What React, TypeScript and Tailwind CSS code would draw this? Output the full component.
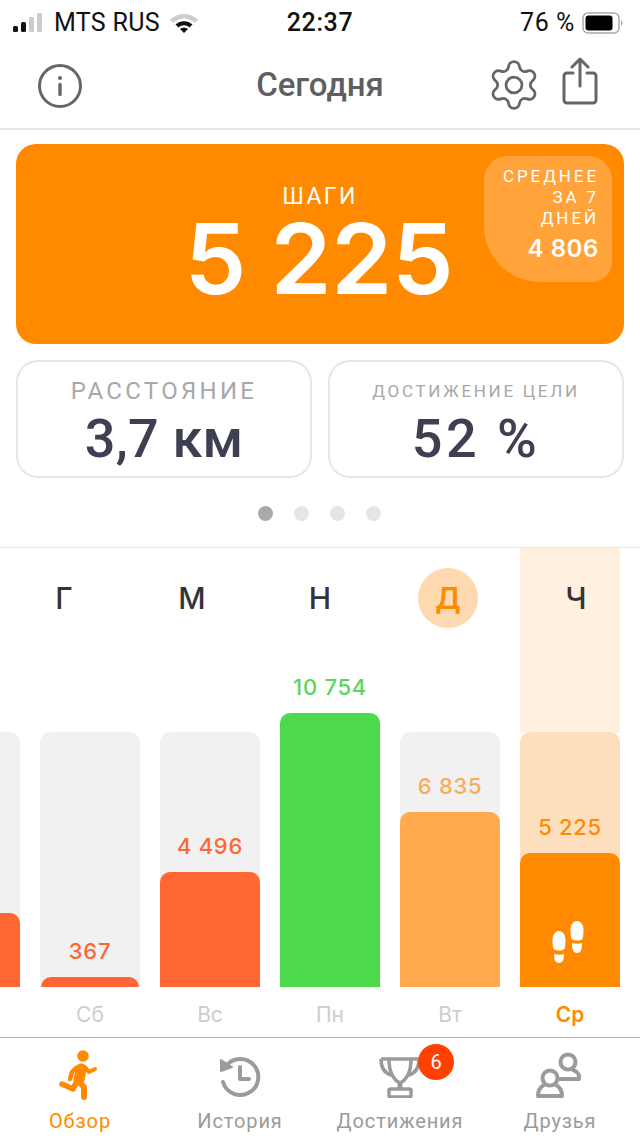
import React from "react";

const sans = "font-['Inter','Liberation_Sans',sans-serif]";
const rob = "font-['Roboto','Liberation_Sans',sans-serif]";

function Signal() {
  return (
    <svg width="32" height="20" viewBox="0 0 32 20" className="mr-[10px]">
      <rect x="1" y="13" width="5" height="6" rx="1.5" fill="#111" />
      <rect x="9" y="9" width="5" height="10" rx="1.5" fill="#111" />
      <rect x="17" y="4" width="5" height="15" rx="1" fill="#ccc" />
      <rect x="25" y="0" width="5" height="19" rx="1" fill="#ccc" />
    </svg>
  );
}

function Wifi() {
  return (
    <svg width="30" height="22" viewBox="0 0 30 22">
      <path d="M1 7.5 C9 0 21 0 29 7.5 L26 11 C19 5 11 5 4 11 Z" fill="#ccc" />
      <path d="M6.5 12.5 C11.5 8 18.5 8 23.5 12.5 L20.5 15.5 C17 12.5 13 12.5 9.5 15.5 Z" fill="#111" />
      <path d="M11 17 C13.5 15 16.5 15 19 17 L15 21 Z" fill="#111" />
    </svg>
  );
}

function Battery() {
  return (
    <svg width="42" height="22" viewBox="0 0 42 22">
      <rect x="1" y="1" width="36" height="20" rx="5" fill="none" stroke="#aaa" strokeWidth="1.5" />
      <rect x="3.5" y="3.5" width="27" height="15" rx="3" fill="#000" />
      <path d="M39 8 C41 9 41 13 39 14 Z" fill="#aaa" />
    </svg>
  );
}

function Info() {
  return (
    <svg width="46" height="46" viewBox="0 0 46 46" fill="none" stroke="#666" strokeWidth="3">
      <circle cx="23" cy="23" r="20.5" />
      <circle cx="23" cy="15" r="2" fill="#666" stroke="none" />
      <path d="M23 21.5 V31.5" strokeLinecap="round" strokeWidth="3.4" />
    </svg>
  );
}

function Gear() {
  return (
    <svg width="56" height="56" viewBox="0 0 24 24" fill="none" stroke="#666" strokeWidth="1.2" strokeLinecap="round" strokeLinejoin="round">
      <path d="M9.671 4.136a2.34 2.34 0 0 1 4.659 0 2.34 2.34 0 0 0 3.319 1.915 2.34 2.34 0 0 1 2.33 4.033 2.34 2.34 0 0 0 0 3.831 2.34 2.34 0 0 1-2.33 4.033 2.34 2.34 0 0 0-3.319 1.915 2.34 2.34 0 0 1-4.659 0 2.34 2.34 0 0 0-3.32-1.915 2.34 2.34 0 0 1-2.33-4.033 2.34 2.34 0 0 0 0-3.831A2.34 2.34 0 0 1 6.35 6.051a2.34 2.34 0 0 0 3.319-1.915" />
      <circle cx="12" cy="12" r="3.4" />
    </svg>
  );
}

function Share() {
  return (
    <svg width="36" height="48" viewBox="0 0 36 48" fill="none" stroke="#666" strokeWidth="3" strokeLinecap="round" strokeLinejoin="round">
      <path d="M11 16 H5 a3 3 0 0 0 -3 3 V43 a3 3 0 0 0 3 3 H31 a3 3 0 0 0 3 -3 V19 a3 3 0 0 0 -3 -3 H25" />
      <path d="M18 29 V3 M10 10 L18 2 L26 10" />
    </svg>
  );
}

function Runner() {
  return (
    <svg width="40" height="52" viewBox="0 0 40 52" fill="none" stroke="#ff8a00" strokeLinecap="round" strokeLinejoin="round">
      <circle cx="25" cy="7" r="5.8" fill="#ff8a00" stroke="none" />
      <path d="M23 20 L21 31" strokeWidth="11" />
      <path d="M20 32 L26 38 L26 48" strokeWidth="6" />
      <path d="M19 32 L15 40 L4 35" strokeWidth="5.5" />
      <path d="M18 19 L14 23 L12 30" strokeWidth="4.5" />
      <path d="M27 18 L31 23 L37 20" strokeWidth="4" />
    </svg>
  );
}

function HistoryIcon() {
  return (
    <svg width="44" height="44" viewBox="0 0 44 44" fill="none" stroke="#9b9b9b" strokeWidth="4" strokeLinecap="round" strokeLinejoin="round">
      <path d="M8 12 A18 18 0 1 1 5 28" />
      <path d="M3 6 L14 13 L3 17 Z" fill="#9b9b9b" strokeWidth="2" />
      <path d="M22 13 V25 H31" />
    </svg>
  );
}

function TrophyIcon() {
  return (
    <svg width="44" height="44" viewBox="0 0 44 44" fill="none" stroke="#9b9b9b" strokeWidth="3.5" strokeLinejoin="round">
      <path d="M3 5 H41" />
      <path d="M3 5 C3 13 6 19 13 21 M41 5 C41 13 38 19 31 21" />
      <path d="M11 5 C11 16 14 25 22 29 C30 25 33 16 33 5" />
      <path d="M22 29 V35" strokeWidth="5" />
      <rect x="11" y="35" width="22" height="8" rx="1.5" />
    </svg>
  );
}

function FriendsIcon() {
  return (
    <svg width="48" height="46" viewBox="0 0 48 46" fill="none" stroke="#9b9b9b" strokeWidth="4" strokeLinecap="round" strokeLinejoin="round">
      <circle cx="33" cy="10" r="7.5" />
      <path d="M25 27 H44 C45 22 41 19 38 18" />
      <circle cx="15" cy="26" r="7.5" />
      <path d="M3 44 H27 C27 39 25 35 21 33 M9 33 C5 35 3 39 3 44" />
    </svg>
  );
}

function Steps() {
  return (
    <svg width="34" height="44" viewBox="0 0 34 44" fill="#fff">
      <path d="M8 11 C12 11 14.5 15 14.5 20 C14.5 24 14 27 13.5 29 C10 31 6 31 2.5 29 C2 27 1.5 24 1.5 20 C1.5 15 4 11 8 11 Z" />
      <path d="M3 34 C7 35 10 35 13 34 C13 39 12 43 8 43 C4 43 3 39 3 34 Z" />
      <path d="M26 1 C30 1 32.5 5 32.5 10 C32.5 14 32 17 31.5 19 C28 21 24 21 20.5 19 C20 17 19.5 14 19.5 10 C19.5 5 22 1 26 1 Z" />
      <path d="M21 23 C25 24 28 24 31 23 C31 29 30 33 26 33 C22 33 21 29 21 23 Z" />
    </svg>
  );
}

function StatCard({ title, value, small }: { title: string; value: string; small?: boolean }) {
  return (
    <div className="flex h-[118px] flex-1 flex-col items-center rounded-[22px] border-2 border-[#e6e6e6] bg-white">
      <div
        className={`${rob} ${
          small ? "mt-[14px] h-[32px] text-[17px] tracking-[2.7px]" : "mt-[14px] h-[32px] text-[24px] tracking-[3.3px]"
        } leading-[30px] text-[#a8a8a8]`}
      >
        {title}
      </div>
      <div
        className={`${rob} mt-[3px] text-[54px] leading-[56px] font-medium ${
          small ? "tracking-[3.5px]" : "tracking-[0.2px]"
        } text-[#3f3f52]`}
      >
        {value}
      </div>
    </div>
  );
}

const bars = [
  { v: "", h: 74, c: "bg-[#ff6633]", t: "text-[#ff6633]", day: "" },
  { v: "367", h: 10, c: "bg-[#ff6633]", t: "text-[#ff6633]", day: "Сб", inset: true },
  { v: "4 496", h: 115, c: "bg-[#ff6633]", t: "text-[#ff6633]", day: "Вс" },
  { v: "10 754", h: 274, c: "bg-[#4cd94c]", t: "text-[#5ad65a]", day: "Пн" },
  { v: "6 835", h: 175, c: "bg-[#ffaa4d]", t: "text-[#f9ac55]", day: "Вт" },
  { v: "5 225", h: 134, c: "bg-[#ff8a00]", t: "text-[#ff8a00]", day: "Ср", today: true },
];

function Tab({ icon, label, active, badge }: { icon: React.ReactNode; label: string; active?: boolean; badge?: string }) {
  return (
    <div className="relative flex flex-col items-center">
      <div className="flex h-[71px] items-end pb-[11px]">{icon}</div>
      {badge && (
        <div
          className={`${rob} absolute top-[6px] left-[98px] flex h-[36px] w-[36px] items-center justify-center rounded-full bg-[#ff4000] text-[20px] text-white`}
        >
          {badge}
        </div>
      )}
      <div className={`${rob} -mt-[1px] text-[20px] leading-[26px] tracking-[0.9px] ${active ? "text-[#ff8a00]" : "text-[#9b9b9b]"}`}>
        {label}
      </div>
    </div>
  );
}

export default function App() {
  return (
    <div className={`${sans} flex h-[1136px] w-[640px] flex-col overflow-hidden bg-white`}>
      {/* status bar */}
      <div className="relative flex h-[44px] shrink-0 items-center pt-[1px] pr-[16px] pl-[12px] text-[#111]">
        <Signal />
        <span className={`${rob} text-[25px] tracking-[0.3px]`}>MTS RUS</span>
        <span className="ml-[9px]">
          <Wifi />
        </span>
        <span className={`${rob} absolute left-0 w-full text-center text-[25px] font-medium tracking-[0.6px]`}>22:37</span>
        <span className={`${rob} mr-[7px] ml-auto text-[25px] tracking-[0.6px]`}>76 %</span>
        <Battery />
      </div>

      {/* header */}
      <div className="relative flex h-[86px] shrink-0 items-center border-b-2 border-[#e5e5e5] pr-[40px] pl-[37px]">
        <Info />
        <div className={`${rob} absolute left-0 -mt-[3px] w-full text-center text-[33px] font-medium text-[#5f5f63]`}>Сегодня</div>
        <div className="ml-auto flex items-center gap-[12px]">
          <span className="-mx-[6px] -mt-[2px]">
            <Gear />
          </span>
          <span className="-mt-[10px] mr-[2px] ml-[14px]">
            <Share />
          </span>
        </div>
      </div>

      {/* steps */}
      <div className="relative mx-[16px] mt-[14px] flex h-[200px] shrink-0 flex-col items-center rounded-[20px] bg-[#ff8a00] text-white">
        <div className={`${rob} mt-[39px] text-[23px] leading-[28px] tracking-[2.4px]`}>ШАГИ</div>
        <div className={`${sans} mt-[10px] mr-[2px] text-[98px] leading-[76px] font-semibold tracking-[-0.3px]`}>5 225</div>
        <div className="absolute top-[12px] right-[12px] h-[126px] w-[128px] rounded-tl-[24px] rounded-tr-[24px] rounded-br-[20px] rounded-bl-[56px] bg-[#ffa33a] pt-[10px] pr-[13px] text-right">
          <div className={`${rob} text-[17px] leading-[21px] tracking-[2.9px]`}>СРЕДНЕЕ<br />ЗА 7<br />ДНЕЙ</div>
          <div className={`${sans} mt-[5px] text-[24px] leading-[30px] font-semibold tracking-[0.6px]`}>4 806</div>
        </div>
      </div>

      {/* stat cards */}
      <div className="mx-[16px] mt-[16px] flex shrink-0 gap-[16px]">
        <StatCard title="РАССТОЯНИЕ" value="3,7 км" />
        <StatCard title="ДОСТИЖЕНИЕ ЦЕЛИ" value="52 %" small />
      </div>

      {/* dots */}
      <div className="mt-[28px] flex shrink-0 justify-center gap-[21px] pr-[1px]">
        <div className="h-[15px] w-[15px] rounded-full bg-[#a9a9a9]" />
        <div className="h-[15px] w-[15px] rounded-full bg-[#e5e5e5]" />
        <div className="h-[15px] w-[15px] rounded-full bg-[#e5e5e5]" />
        <div className="h-[15px] w-[15px] rounded-full bg-[#e5e5e5]" />
      </div>

      {/* chart */}
      <div className="relative mt-[26px] flex-1 overflow-hidden border-t border-[#e5e5e5]">
        <div className="absolute top-0 left-[520px] h-[185px] w-[100px] bg-[#fff0e0]" />
        <div className="relative grid h-[100px] grid-cols-5 items-center">
          {["Г", "М", "Н", "Д", "Ч"].map((d, i) => (
            <div key={d} className="flex justify-center">
              <div
                className={`flex h-[60px] w-[60px] items-center justify-center rounded-full text-[30px] ${
                  i === 3 ? "bg-[#ffdab0] font-semibold text-[#ff8a00]" : "font-medium text-[#333338]"
                }`}
              >
                {d}
              </div>
            </div>
          ))}
        </div>
        <div className="relative -ml-[80px] flex h-[339px] gap-[20px]">
          {bars.map((b) => (
            <div key={b.day || "x"} className="flex w-[100px] shrink-0 flex-col justify-end">
              <div className="relative h-[255px]">
                <div className={`h-full rounded-t-[10px] ${b.today ? "bg-[#fddfbd]" : "bg-[#f1f1f1]"} ${b.v === "10 754" ? "invisible" : ""}`} />
                <div className="absolute inset-x-0 bottom-0 flex flex-col items-center">
                  {b.v && (
                    <div className={`mb-[14px] text-[22px] leading-[24px] font-medium tracking-[0.7px] ${b.t}`}>{b.v}</div>
                  )}
                  <div
                    style={{ height: b.h }}
                    className={`relative flex items-end justify-center rounded-t-[10px] ${b.c} ${b.inset ? "w-[98px]" : "w-full"}`}
                  >
                    {b.today && (
                      <span className="mb-[23px] ml-[-5px]">
                        <Steps />
                      </span>
                    )}
                  </div>
                </div>
              </div>
            </div>
          ))}
        </div>
        <div className="-ml-[80px] flex h-[50px] gap-[20px] pt-[14px]">
          {bars.map((b) => (
            <div
              key={b.day || "y"}
              className={`w-[100px] shrink-0 text-center text-[21px] leading-[28px] ${
                b.today ? "font-semibold text-[#ff8a00]" : "text-[#cdcdcd]"
              }`}
            >
              {b.day}
            </div>
          ))}
        </div>
      </div>

      {/* tab bar */}
      <div className="grid h-[99px] shrink-0 grid-cols-4 border-t border-[#b3b3b3]">
        <Tab icon={<span className="-mb-[3px] -ml-[4px] block"><Runner /></span>} label="Обзор" active />
        <Tab icon={<HistoryIcon />} label="История" />
        <Tab icon={<TrophyIcon />} label="Достижения" badge="6" />
        <Tab icon={<span className="-ml-[2px] block"><FriendsIcon /></span>} label="Друзья" />
      </div>
    </div>
  );
}
